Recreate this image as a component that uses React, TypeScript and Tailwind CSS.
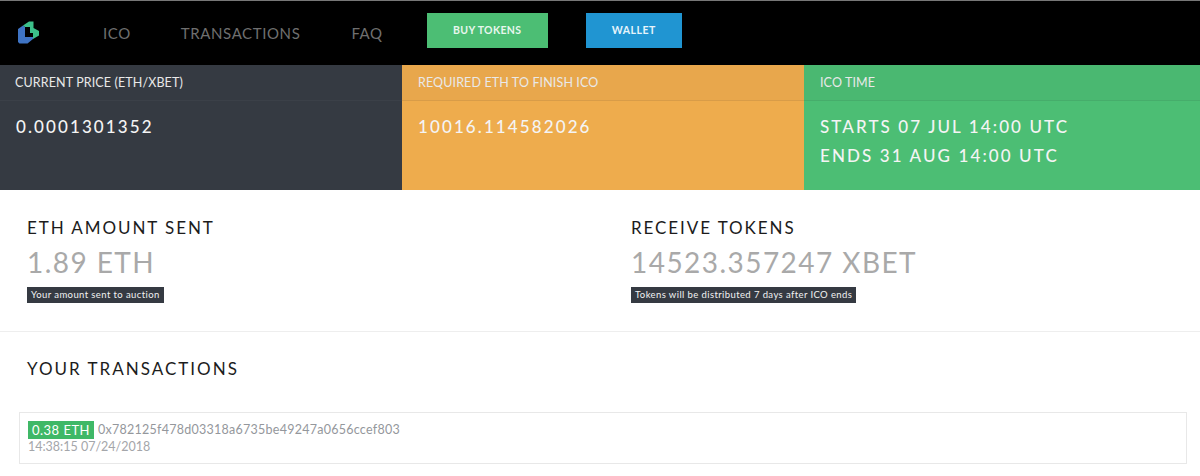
import React from 'react';

const font = { fontFamily: 'Lato, "Open Sans", "Liberation Sans", sans-serif' };

const Logo = () => (
  <svg width="22" height="23" viewBox="0 0 22 23" className="shrink-0">
    <path d="M0 8 L5 4.5 L7 6 L7 16 L15 16 L15 18 L9.5 22.5 L1.5 22.5 L0 21 Z" fill="#3f74c4" />
    <path d="M5 4.5 L11 0.5 L15.5 0.5 L15.5 7 L21 10 L21 14.5 L15 18 L15 12 L12 12 L12 6 L7 6 Z" fill="#3cc08a" />
  </svg>
);

const Panel = ({ title, lines, bg, headBg, border, w, pad }: { title: string; lines: string[]; bg: string; headBg: string; border: string; w: string; pad: string }) => (
  <div className={`${w} ${bg} h-[125px]`}>
    <div className={`h-[36px] ${headBg} border-b ${border} ${pad} pt-[2px] flex items-center`}>
      <span className="text-[12.5px] tracking-[0.12px] text-[#e9e9e9]">{title}</span>
    </div>
    <div className="pl-[16px] pt-[15px] flex flex-col gap-[8px]">
      {lines.map((line) => (
        <div key={line} className="text-[17px] leading-[21px] font-medium tracking-[2.1px] text-[#f4f4f4]">
          {line}
        </div>
      ))}
    </div>
  </div>
);

const Stat = ({ title, value, note, w }: { title: string; value: string; note: string; w: string }) => (
  <div className={w}>
    <div className="text-[17px] leading-[20px] tracking-[1.92px] text-[#1c1c1c]">{title}</div>
    <div className="mt-[7px] text-[28px] leading-[34px] tracking-[1.45px] text-[#a9a9a9]">{value}</div>
    <div className="mt-[8px] inline-block bg-[#353a42] px-[4px] h-[16px] leading-[16px] text-[9.5px] tracking-[0.4px] text-[#f2f2f2] align-top">
      {note}
    </div>
  </div>
);

export default function App() {
  return (
    <div className="w-[1200px] h-[476px] overflow-hidden bg-white" style={font}>
      {/* Header */}
      <div className="h-[65px] bg-black border-t border-[#777] flex items-center">
        <div className="ml-[18px] -mt-[1px]"><Logo /></div>
        <nav className="ml-[63px] flex items-center text-[#6f6f6f] text-[15px] tracking-[0.6px]">
          <span>ICO</span>
          <span className="ml-[50px]">TRANSACTIONS</span>
          <span className="ml-[51px]">FAQ</span>
        </nav>
        <div className="ml-[44px] -mt-[6px] w-[121px] h-[35px] bg-[#4cbe74] flex items-center justify-center pt-[2px] text-[10.5px] font-bold tracking-[0.35px] text-[#e8f6ee]">
          BUY TOKENS
        </div>
        <div className="ml-[38px] -mt-[6px] w-[96px] h-[35px] bg-[#2095d2] flex items-center justify-center pt-[2px] text-[10.5px] font-bold tracking-[0.5px] text-[#e6f4fb]">
          WALLET
        </div>
      </div>

      {/* Info panels */}
      <div className="flex">
        <Panel w="w-[402px]" pad="pl-[15px]" bg="bg-[#353a42]" headBg="bg-[#353a42]" border="border-[#3b4048]" title="CURRENT PRICE (ETH/XBET)" lines={['0.0001301352']} />
        <Panel w="w-[402px]" pad="pl-[16px]" bg="bg-[#eeac4d]" headBg="bg-[#e8a74c]" border="border-[#d89c48]" title="REQUIRED ETH TO FINISH ICO" lines={['10016.114582026']} />
        <Panel w="w-[396px]" pad="pl-[16px]" bg="bg-[#4cbe74]" headBg="bg-[#4ab871]" border="border-[#46ad6b]" title="ICO TIME" lines={['STARTS 07 JUL 14:00 UTC', 'ENDS 31 AUG 14:00 UTC']} />
      </div>

      {/* Amounts */}
      <div className="h-[142px] border-b border-[#eeeeee] pl-[27px] pt-[28px] flex">
        <Stat w="w-[604px]" title="ETH AMOUNT SENT" value="1.89 ETH" note="Your amount sent to auction" />
        <Stat w="w-[500px]" title="RECEIVE TOKENS" value="14523.357247 XBET" note="Tokens will be distributed 7 days after ICO ends" />
      </div>

      {/* Transactions */}
      <div className="pl-[27px] pt-[27px] text-[17px] leading-[20px] tracking-[2px] text-[#1c1c1c]">YOUR TRANSACTIONS</div>
      <div className="ml-[19px] mr-[13px] mt-[33px] h-[52px] border border-[#e8e8e8] pl-[8px] pt-[8px]">
        <div className="flex items-center h-[18px]">
          <span className="bg-[#3fb867] text-white text-[13px] tracking-[0.5px] leading-[18px] w-[66px] text-center">0.38 ETH</span>
          <span className="ml-[4px] text-[12.5px] tracking-[0.26px] text-[#94979c]">0x782125f478d03318a6735be49247a0656ccef803</span>
        </div>
        <div className="text-[12.5px] leading-[16px] tracking-[0px] text-[#a4a6aa]">14:38:15 07/24/2018</div>
      </div>
    </div>
  );
}
